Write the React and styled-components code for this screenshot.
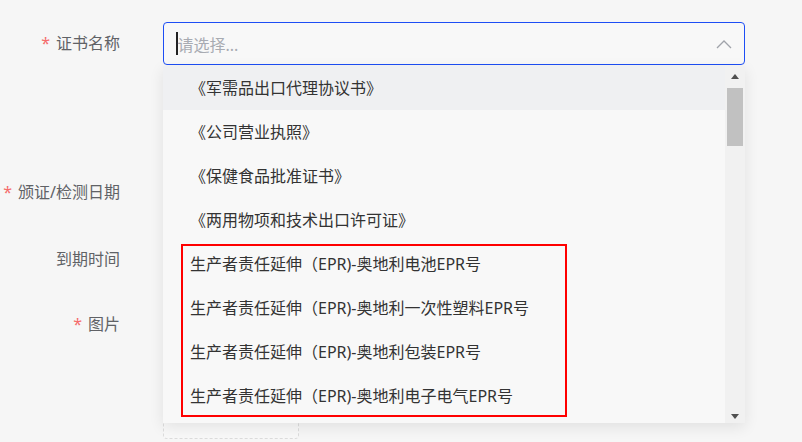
import React from "react";
import styled, { createGlobalStyle } from "styled-components";

const GlobalStyle = createGlobalStyle`
  html, body {
    margin: 0;
    padding: 0;
    overflow: hidden;
    background: #f6f6f6;
  }
  body {
    font-family: "Noto Sans", "Noto Sans CJK SC", sans-serif;
  }
  * { box-sizing: border-box; }
`;

const Page = styled.div`
  width: 802px;
  height: 442px;
  padding-top: 22px;
  background: #f6f6f6;
`;

const Form = styled.div`
  display: flex;
  flex-direction: column;
`;

const FormItem = styled.div`
  display: grid;
  grid-template-columns: 120px 582px;
  column-gap: 43px;
  align-items: start;
  margin-bottom: ${(p) => p.$after || 0}px;
  position: relative;
  z-index: ${(p) => p.$z || 0};
`;

const Label = styled.div`
  height: 43px;
  line-height: 43px;
  text-align: right;
  font-size: 16px;
  color: #606266;
  white-space: nowrap;
`;

const Star = styled.span`
  color: #f56c6c;
  margin-right: 6px;
`;

const SelectWrap = styled.div`
  position: relative;
`;

const SelectBox = styled.div`
  height: 43px;
  border: 1px solid ${(p) => (p.$focus ? "#1d4ef5" : "#dcdfe6")};
  border-radius: 4px;
  background: #f8f8f8;
  padding: 0 12px 0 12px;
  display: flex;
  align-items: center;
`;

const Caret = styled.span`
  width: 1.5px;
  height: 23px;
  background: #222;
`;

const Placeholder = styled.span`
  flex: 1;
  font-size: 16px;
  color: #a8abb2;
`;

const Chevron = styled.svg`
  width: 16px;
  height: 10px;
  display: block;
`;

const Dropdown = styled.div`
  position: absolute;
  top: 44px;
  left: 0;
  width: 582px;
  height: 357px;
  background: #f8f8f8;
  box-shadow: 0 4px 14px rgba(0, 0, 0, 0.09);
  display: flex;
  z-index: 10;
`;

const List = styled.div`
  flex: 1;
  overflow: hidden;
  position: relative;
`;

const Option = styled.div`
  height: 44px;
  line-height: 44px;
  padding-left: 27px;
  font-size: 16px;
  color: #333333;
  white-space: nowrap;
  background: ${(p) => (p.$active ? "#eff0f2" : "transparent")};
`;

const Scrollbar = styled.div`
  width: 20px;
  background: #f1f1f1;
  display: flex;
  flex-direction: column;
  align-items: center;
`;

const ArrowBtn = styled.div`
  width: 100%;
  height: 17px;
  display: flex;
  align-items: center;
  justify-content: center;
  margin-top: ${(p) => (p.$down ? "auto" : "0")};
  &::before {
    content: "";
    width: 0;
    height: 0;
    border-left: 4.5px solid transparent;
    border-right: 4.5px solid transparent;
    ${(p) =>
      p.$down
        ? "border-top: 5px solid #505050; margin-top: 4px;"
        : "border-bottom: 5px solid #505050; margin-top: 4px;"}
  }
`;

const Thumb = styled.div`
  width: 16px;
  height: 58px;
  margin-top: 5px;
  background: #c1c1c1;
`;

const Annotation = styled.div`
  position: absolute;
  left: 18px;
  top: 178px;
  width: 386px;
  height: 173px;
  border: 2px solid #ff0000;
  pointer-events: none;
`;

const Field = styled.div`
  height: 43px;
  border: 1px solid #dcdfe6;
  border-radius: 4px;
  background: #f8f8f8;
`;

const Upload = styled.div`
  width: 136px;
  height: 136px;
  border: 1px dashed #dcdcdc;
  border-radius: 4px;
  background: #f8f8f8;
`;

const options = [
  "《军需品出口代理协议书》",
  "《公司营业执照》",
  "《保健食品批准证书》",
  "《两用物项和技术出口许可证》",
  "生产者责任延伸（EPR)-奥地利电池EPR号",
  "生产者责任延伸（EPR)-奥地利一次性塑料EPR号",
  "生产者责任延伸（EPR)-奥地利包装EPR号",
  "生产者责任延伸（EPR)-奥地利电子电气EPR号",
];

export default function App() {
  return (
    <>
      <GlobalStyle />
      <Page>
        <Form>
          <FormItem $after={106} $z={5}>
            <Label>
              <Star>*</Star>证书名称
            </Label>
            <SelectWrap>
              <SelectBox $focus>
                <Caret />
                <Placeholder>请选择...</Placeholder>
                <Chevron viewBox="0 0 16 10">
                  <polyline
                    points="1,9 8,2 15,9"
                    fill="none"
                    stroke="#a0a3aa"
                    strokeWidth="1.3"
                  />
                </Chevron>
              </SelectBox>
              <Dropdown>
                <List>
                  {options.map((o, i) => (
                    <Option key={i} $active={i === 0}>
                      {o}
                    </Option>
                  ))}
                  <Annotation />
                </List>
                <Scrollbar>
                  <ArrowBtn />
                  <Thumb />
                  <ArrowBtn $down />
                </Scrollbar>
              </Dropdown>
            </SelectWrap>
          </FormItem>
          <FormItem $after={24}>
            <Label>
              <Star>*</Star>颁证/检测日期
            </Label>
            <Field />
          </FormItem>
          <FormItem $after={22}>
            <Label>到期时间</Label>
            <Field />
          </FormItem>
          <FormItem>
            <Label>
              <Star>*</Star>图片
            </Label>
            <Upload />
          </FormItem>
        </Form>
      </Page>
    </>
  );
}
